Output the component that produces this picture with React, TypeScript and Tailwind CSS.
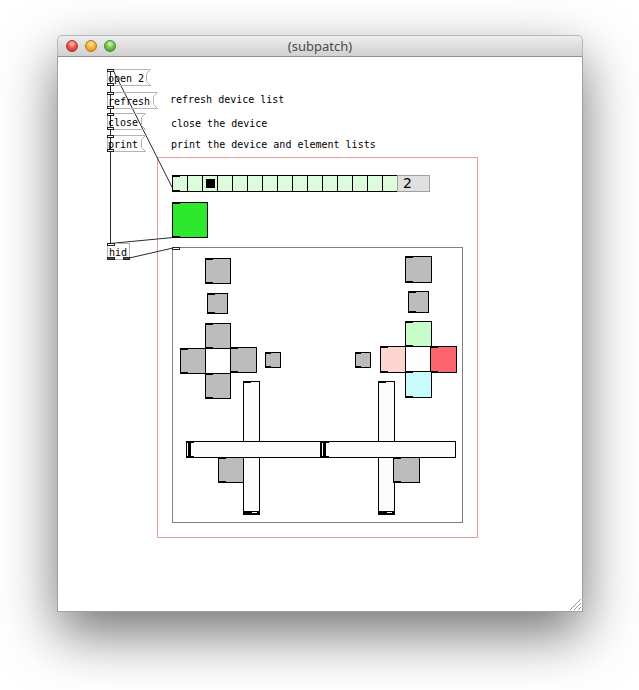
import React from 'react'

// Pd patch canvas: nodes live on a free canvas, so they are placed by coordinates
const mono = "font-['DejaVu_Sans_Mono',monospace]"

const pads = [
  // left stick
  { cls: 'left-[147px] top-[201px] w-[26px] h-[26px] bg-[#bcbcbc]' },
  { cls: 'left-[149px] top-[236px] w-[21px] h-[21px] bg-[#bcbcbc]' },
  { cls: 'left-[147px] top-[266px] w-[26px] h-[26px] bg-[#bcbcbc]' },
  { cls: 'left-[122px] top-[291px] w-[26px] h-[26px] bg-[#bcbcbc]' },
  { cls: 'left-[172px] top-[290px] w-[27px] h-[26px] bg-[#bcbcbc]' },
  { cls: 'left-[147px] top-[316px] w-[26px] h-[26px] bg-[#bcbcbc]' },
  { cls: 'left-[207px] top-[295px] w-[16px] h-[16px] bg-[#bcbcbc]', small: true },
  { cls: 'left-[160px] top-[400px] w-[26px] h-[26px] bg-[#bcbcbc]' },
  // right stick
  { cls: 'left-[347px] top-[199px] w-[27px] h-[27px] bg-[#bcbcbc]' },
  { cls: 'left-[350px] top-[234px] w-[21px] h-[22px] bg-[#bcbcbc]' },
  { cls: 'left-[347px] top-[264px] w-[27px] h-[26px] bg-[#c8fcc8]' },
  { cls: 'left-[322px] top-[289px] w-[26px] h-[27px] bg-[#fcd4d0]' },
  { cls: 'left-[372px] top-[289px] w-[27px] h-[27px] bg-[#fc6470]' },
  { cls: 'left-[347px] top-[314px] w-[27px] h-[27px] bg-[#c8fcfc]' },
  { cls: 'left-[297px] top-[295px] w-[16px] h-[16px] bg-[#bcbcbc]', small: true },
  { cls: 'left-[335px] top-[400px] w-[27px] h-[26px] bg-[#bcbcbc]' },
]

const messages = [
  { label: 'open 2', w: 44, cls: 'left-[49px] top-[12px]' },
  { label: 'refresh', w: 51, cls: 'left-[49px] top-[35px]' },
  { label: 'close', w: 39, cls: 'left-[49px] top-[56px]' },
  { label: 'print', w: 39, cls: 'left-[49px] top-[78px]' },
]

const comments = [
  { text: 'refresh device list', cls: 'left-[112px] top-[37px]' },
  { text: 'close the device', cls: 'left-[113px] top-[61px]' },
  { text: 'print the device and element lists', cls: 'left-[113px] top-[82px]' },
]

function Port({ cls }: { cls: string }) {
  return <span className={`absolute w-[7px] h-[3px] border border-[#222] bg-white ${cls}`} />
}

function Pad({ cls, small }: { cls: string; small?: boolean }) {
  return (
    <div className={`absolute border border-black ${cls}`}>
      <span className={`absolute -left-px -top-px h-[2px] bg-black ${small ? 'w-[6px]' : 'w-[8px]'}`} />
      <span className={`absolute -left-px -bottom-px h-[2px] bg-black ${small ? 'w-[6px]' : 'w-[8px]'}`} />
    </div>
  )
}

function Msg({ label, w, cls }: { label: string; w: number; cls: string }) {
  return (
    <div className={`absolute h-[17px] ${cls}`} style={{ width: w }}>
      <svg width={w} height={17} className="absolute left-0 top-0">
        <polygon
          points={`0.5,0.5 ${w - 0.5},0.5 ${w - 4.5},4.5 ${w - 4.5},12.5 ${w - 0.5},16.5 0.5,16.5`}
          fill="none"
          stroke="#b4b4b4"
        />
      </svg>
      <Port cls="left-0 top-0" />
      <Port cls="left-0 bottom-0" />
      <span className={`relative block pl-[1px] pt-px text-[10px] leading-[17px] text-black whitespace-pre ${mono}`}>
        {label}
      </span>
    </div>
  )
}

function VSlider({ cls }: { cls: string }) {
  return (
    <div className={`absolute border border-black bg-[#fcfcfc] ${cls}`}>
      <span className="absolute -left-px -top-px w-[8px] h-[2px] bg-black" />
      <span className="absolute left-0 right-0 bottom-0 h-[3px] bg-black" />
      <span className="absolute left-[8px] right-[2px] bottom-[1px] h-px bg-white" />
    </div>
  )
}

function HSlider({ cls }: { cls: string }) {
  return (
    <div className={`absolute border border-black bg-[#fcfcfc] ${cls}`}>
      <span className="absolute -left-px -top-px w-[8px] h-[2px] bg-black" />
      <span className="absolute -left-px -bottom-px w-[8px] h-[2px] bg-black" />
      <span className="absolute left-[1px] top-0 bottom-0 w-[3px] bg-black" />
    </div>
  )
}

function Light({ cls }: { cls: string }) {
  return <span className={`w-[12px] h-[12px] rounded-full border ${cls}`} />
}

export default function App() {
  return (
    <div className="w-[639px] h-[690px] bg-white pl-[57px] pt-[35px] overflow-hidden">
      <div className="w-[526px] rounded-t-[5px] shadow-[0_22px_55px_rgba(0,0,0,0.55)]">
        {/* Title bar */}
        <div className="h-[22px] grid grid-cols-[1fr_auto_1fr] items-center rounded-t-[5px] bg-linear-to-b from-[#ededed] to-[#d0d0d0] border border-[#b8b8b8] border-b-[#8e8e8e]">
          <div className="flex gap-[7px] pl-[8px]">
            <Light cls="border-[#a5362e] bg-[radial-gradient(circle_at_50%_30%,#ffc2bc_0%,#f25a50_45%,#c0291f_100%)]" />
            <Light cls="border-[#b07b1c] bg-[radial-gradient(circle_at_50%_30%,#ffe6a8_0%,#f6b53a_45%,#c98715_100%)]" />
            <Light cls="border-[#4a8a30] bg-[radial-gradient(circle_at_50%_30%,#d9f8bc_0%,#72c94e_45%,#3a8c25_100%)]" />
          </div>
          <div className="text-[13px] leading-none text-[#4a4a4a] font-['Noto_Sans',sans-serif]">(subpatch)</div>
          <div />
        </div>

        {/* Patch canvas */}
        <div className="relative h-[555px] bg-white border-x border-b border-[#a0a0a0]">
          {/* graph-on-parent frames */}
          <div className="absolute left-[99px] top-[100px] w-[321px] h-[381px] border border-[#ef9a9a]" />
          <div className="absolute left-[114px] top-[190px] w-[291px] h-[276px] border border-[#808080]">
            <span className="absolute -left-px -top-px w-[8px] h-[3px] border border-[#222] bg-white" />
          </div>

          {/* wires */}
          <svg className="absolute left-0 top-0" width={524} height={554}>
            <g stroke="#2a2a2a" strokeWidth={1} fill="none">
              <line x1={52.5} y1={13} x2={52.5} y2={186} />
              <line x1={55} y1={13} x2={116} y2={134} />
              <line x1={115} y1={180.5} x2={52} y2={186.5} />
              <line x1={67} y1={202} x2={115} y2={191} />
            </g>
          </svg>

          {messages.map((m) => (
            <Msg key={m.label} {...m} />
          ))}

          {comments.map((c) => (
            <span
              key={c.text}
              className={`absolute text-[10px] leading-[12px] text-black whitespace-pre ${mono} ${c.cls}`}
            >
              {c.text}
            </span>
          ))}

          {/* hid object */}
          <div className="absolute left-[49px] top-[186px] w-[23px] h-[17px] border border-[#b4b4b4] bg-white">
            <span className="absolute -left-px -top-px w-[8px] h-[3px] border border-[#222] bg-white" />
            <span className="absolute -left-px -bottom-px w-[8px] h-[3px] border border-[#222] bg-[#555]" />
            <span className="absolute -right-px -bottom-px w-[7px] h-[3px] border border-[#222] bg-[#555]" />
            <span className={`block pl-px pt-px text-[10px] leading-[15px] text-black ${mono}`}>hid</span>
          </div>

          {/* hradio + number */}
          <div className="absolute left-[114px] top-[118px] flex">
            {Array.from({ length: 15 }).map((_, i) => (
              <div
                key={i}
                className={`w-[16px] h-[17px] border border-black bg-[#dcfcdc] flex items-center justify-center ${i > 0 ? '-ml-px' : ''}`}
              >
                {i === 2 && <span className="w-[9px] h-[9px] bg-black" />}
              </div>
            ))}
            <div className="-ml-px w-[33px] h-[17px] border border-[#a0a0a0] bg-[#e0e0e0] pl-[5px] text-[14px] leading-[15px] text-black font-['DejaVu_Sans',sans-serif]">
              2
            </div>
            <span className="absolute left-0 top-0 w-[8px] h-[2px] bg-black" />
            <span className="absolute left-0 bottom-0 w-[8px] h-[2px] bg-black" />
          </div>

          {/* toggle */}
          <div className="absolute left-[114px] top-[145px] w-[36px] h-[36px] border border-black bg-[#2ee82e]">
            <span className="absolute -left-px -top-px w-[8px] h-[2px] bg-black" />
            <span className="absolute -left-px -bottom-px w-[8px] h-[2px] bg-black" />
          </div>

          {/* sticks */}
          <VSlider cls="left-[185px] top-[324px] w-[17px] h-[134px]" />
          <VSlider cls="left-[320px] top-[324px] w-[17px] h-[134px]" />
          <HSlider cls="left-[128px] top-[384px] w-[135px] h-[17px]" />
          <HSlider cls="left-[263px] top-[384px] w-[135px] h-[17px]" />

          {pads.map((p) => (
            <Pad key={p.cls} {...p} />
          ))}

          {/* resize grip */}
          <svg className="absolute right-[1px] bottom-[1px]" width={12} height={12}>
            <g stroke="#9a9a9a" strokeWidth={1}>
              <line x1={1} y1={12} x2={12} y2={1} />
              <line x1={5} y1={12} x2={12} y2={5} />
              <line x1={9} y1={12} x2={12} y2={9} />
            </g>
          </svg>
        </div>
      </div>
    </div>
  )
}
